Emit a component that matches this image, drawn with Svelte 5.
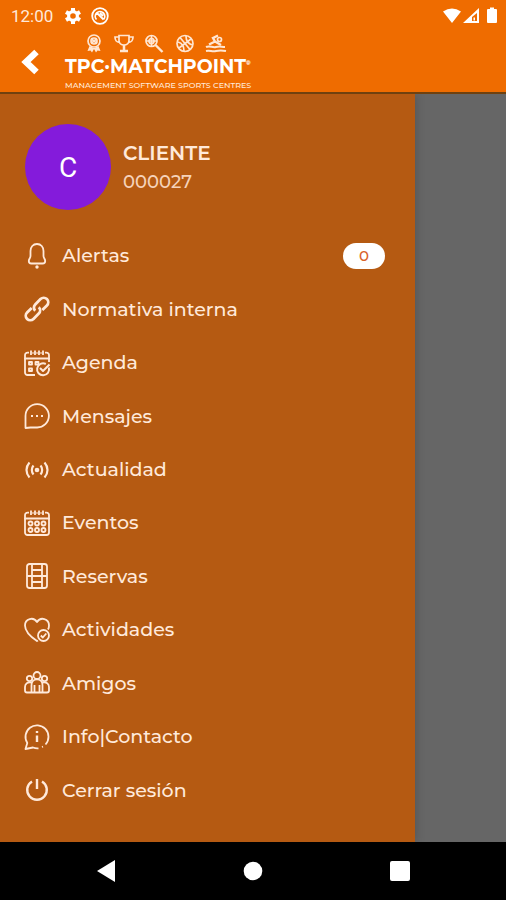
<script>
    const user = { name: 'CLIENTE', code: '000027' };
    const items = [
        { icon: 'bell', label: 'Alertas', count: 0 },
        { icon: 'link', label: 'Normativa interna' },
        { icon: 'agenda', label: 'Agenda' },
        { icon: 'chat', label: 'Mensajes' },
        { icon: 'signal', label: 'Actualidad' },
        { icon: 'calendar', label: 'Eventos' },
        { icon: 'court', label: 'Reservas' },
        { icon: 'heart', label: 'Actividades' },
        { icon: 'people', label: 'Amigos' },
        { icon: 'info', label: 'Info|Contacto' },
        { icon: 'power', label: 'Cerrar sesión' }
    ];
</script>

{#snippet icon(name)}
    <svg class="icon" viewBox="0 0 26 26" aria-hidden="true">
        {#if name === 'bell'}
            <path d="M13 1c-4 0-6.500 3-6.500 7v5c0 2-1.700 3-1.700 5 0 1.500 1 2.500 2.500 2.500h11.400c1.500 0 2.500-1 2.500-2.500 0-2-1.700-3-1.700-5V8c0-4-2.500-7-6.500-7z" />
            <circle class="solid" cx="13" cy="24" r="1.700" />
        {:else if name === 'link'}
            <g transform="rotate(-45 13 13)" stroke-width="2.800">
                <path d="M10 8.500H3.500a4.500 4.500 0 0 0 0 9H11a4.500 4.500 0 0 0 4.500-4.500" />
                <path d="M16 17.500h6.500a4.500 4.500 0 0 0 0-9H15a4.500 4.500 0 0 0-4.500 4.500" />
            </g>
        {:else if name === 'agenda' || name === 'calendar'}
            <path d="M7 .5v4.500M11 .5v4.500M15 .5v4.500M19 .5v4.500" />
            <path d="M5 2.700H3.500A2.500 2.500 0 0 0 1 5.200V8.500h24V5.200A2.500 2.500 0 0 0 22.500 2.700H21M8.500 3h1M12.500 3h1M16.500 3h1" />
            {#if name === 'agenda'}
                <path d="M1 8v14.500A2.500 2.500 0 0 0 3.500 25H11M25 8v4" />
                <path d="M5 12h3v2.500H5zM5 18.500h3V21H5zM11.500 12h3v2.500h-3z" />
                <path stroke-width="2" d="M24.800 17.500a6 6 0 1 1-3-3.500" />
                <path stroke-width="2" d="M16 18l3 3 6.500-6.500" />
            {:else}
                <path d="M1 8v14.500A2.500 2.500 0 0 0 3.500 25h19a2.500 2.500 0 0 0 2.500-2.500V8" />
                {#each [13.5, 20] as y}
                    {#each [6.5, 13, 19.5] as x}
                        <circle cx={x} cy={y} r="2" />
                    {/each}
                {/each}
            {/if}
        {:else if name === 'chat'}
            <path d="M1.500 25V13A11.700 11.700 0 1 1 13 24.500H6.500z" />
            <path stroke-width="2.200" d="M7 13h2M12 13h2M17 13h2" />
        {:else if name === 'signal'}
            <circle class="solid" cx="13" cy="13" r="2.300" />
            <path stroke-width="2.200" d="M9.500 8.500c-2.200 2.500-2.200 6.500 0 9M16.500 8.500c2.200 2.500 2.200 6.500 0 9M5.500 5.500c-4 4.500-4 10.500 0 15M20.500 5.500c4 4.500 4 10.500 0 15" />
        {:else if name === 'court'}
            <rect x="3" y="1" width="20" height="24" rx="2.500" />
            <path d="M8 1v24M18 1v24M3 13h20M8 7h10M8 19h10" />
        {:else if name === 'heart'}
            <path d="M14 23.500l-1 .6C7 20 1 14.500 1 8.500 1 1.500 9.500-.5 13 5c3.500-5.500 12-3.500 12 3.500 0 1.500-.4 3-1 4" />
            <circle cx="19.500" cy="18.500" r="5.500" />
            <path d="M16.800 18.500l2 2 3.500-4" />
        {:else if name === 'people'}
            <circle cx="13" cy="5.500" r="3.500" />
            <circle cx="5.500" cy="8.500" r="2.700" />
            <circle cx="20.500" cy="8.500" r="2.700" />
            <path d="M7.500 22.500V15c0-7.500 11-7.500 11 0v7.500zM7.500 12.500c-4-.7-6.500 1-6.500 4.500v3.500a2 2 0 0 0 2 2h4.500M18.500 12.500c4-.7 6.500 1 6.500 4.500v3.500a2 2 0 0 1-2 2h-4.500M10.500 15v7M15.500 15v7" />
        {:else if name === 'info'}
            <path d="M14.500 24.300A11.800 11.800 0 0 1 9 23.500L1.500 25l1.800-6A11.500 11.500 0 1 1 21.500 20.500M18 23l1-.4" />
            <path stroke-width="2.400" d="M13 11.500V18M13 7v2" />
        {:else}
            <path stroke-width="2.400" d="M8 4.500a9.800 9.800 0 1 0 10 0M13 2v10" />
        {/if}
    </svg>
{/snippet}

<div class="screen">
    <div class="status">
        <span>12:00</span>
        <svg width="18" height="18" viewBox="0 0 18 18" aria-hidden="true">
            <circle fill="none" stroke="#fff" stroke-width="3.200" cx="9" cy="9" r="4.400" />
            <path stroke="#fff" stroke-width="4" d="M9 1v3M9 14v3M2 5l2.600 1.500M13.400 11.500L16 13M2 13l2.600-1.500M13.400 6.500L16 5" />
        </svg>
        <svg width="18" height="18" viewBox="0 0 18 18" fill="none" stroke="#fff" stroke-width="1.800" aria-hidden="true">
            <circle cx="9" cy="9" r="7.800" />
            <path d="M5.500 12.500a4.700 4.700 0 1 1 7 0M6 6l6.500 6.500M9 6l3 3" />
        </svg>
        <svg class="system" width="56" height="18" viewBox="0 0 56 18" fill="#fff" aria-hidden="true">
            <path d="M1 4.500Q10 -1.500 19 4.500L10 16zM37 1v15H21z" />
            <path fill="#ef6c00" d="M35 6v8h-5V10z" />
            <path d="M31.500 10.500h1.500v3h-1.500zM46 2h2V.5h4V2h2a1 1 0 0 1 1 1v12a1 1 0 0 1-1 1h-8a1 1 0 0 1-1-1V3a1 1 0 0 1 1-1z" />
        </svg>
    </div>

    <header>
        <button class="back" aria-label="Volver">
            <svg width="20" height="28" viewBox="0 0 20 28" aria-hidden="true">
                <path fill="none" stroke="#fff" stroke-width="6.500" d="M16.500 4L6 14l10.500 10" />
            </svg>
        </button>
        <div class="logo">
            <svg width="142" height="20" viewBox="0 0 142 20" fill="none" stroke="#ffe6d2" stroke-width="1.700" aria-hidden="true">
                <circle cx="9" cy="7" r="6" />
                <circle cx="9" cy="7" r="3" />
                <path d="M6 4.500l6 5M6 9.500l6-5" />
                <path fill="#ffe6d2" d="M4.500 12l-2 5 3-.5L7 18.500 9 15l2 3.500 1.500-2 3 .5-2-5-4.500 2z" stroke="none" />
                <path d="M34 1.500h10v5c0 6-10 6-10 0zM34 3h-4c0 4 1.500 5 4.500 5.500M44 3h4c0 4-1.500 5-4.500 5.500" />
                <path stroke-width="2.500" d="M39 11v5M35 17h8" />
                <circle cx="66.500" cy="7" r="5.500" />
                <circle cx="66.500" cy="7" r="2.500" />
                <path d="M61 7h11M66.500 2v10" />
                <path stroke-width="2.400" d="M70.500 11l7 7" />
                <circle cx="100" cy="9.500" r="8" />
                <path d="M95 3.500l10 12M94 14l12-9M93 8c4 1 6 4 6 9M101 2c0 4 2 8 7 9" />
                <path stroke-width="2" d="M121 13c4-2 6 1 10 0s5 0 9 0M121 17c4-1 6 1 10 0s5-1 10 0" />
                <path stroke-width="2.400" d="M124 10.500l6-3 6 3.500M130 7.500l-2-3.500 5-2.500" />
                <circle cx="134.500" cy="5.500" r="2" />
            </svg>
            <strong>TPC·MATCHPOINT<sup>®</sup></strong>
            <small>MANAGEMENT SOFTWARE SPORTS CENTRES</small>
        </div>
    </header>

    <main>
        <div class="drawer">
            <div class="user">
                <div class="avatar">{user.name[0]}</div>
                <div>
                    <div class="name">{user.name}</div>
                    <div class="code">{user.code}</div>
                </div>
            </div>
            <nav>
                {#each items as item}
                    <a href="#{item.icon}">
                        {@render icon(item.icon)}
                        <span>{item.label}</span>
                        {#if item.count !== undefined}
                            <span class="badge">{item.count}</span>
                        {/if}
                    </a>
                {/each}
            </nav>
        </div>
    </main>

    <footer>
        <button aria-label="Atrás">
            <svg width="20" height="22" viewBox="0 0 20 22"><path fill="#fff" d="M19 0v22L1 11z" /></svg>
        </button>
        <button aria-label="Inicio">
            <svg width="20" height="20" viewBox="0 0 20 20"><circle fill="#fff" cx="10" cy="10" r="9.300" /></svg>
        </button>
        <button aria-label="Recientes">
            <svg width="20" height="20" viewBox="0 0 20 20"><rect fill="#fff" width="20" height="20" rx="2" /></svg>
        </button>
    </footer>
</div>

<style>
:global(body) {
    margin: 0;
    background: #000;
}
.screen {
    display: flex;
    flex-direction: column;
    min-height: 100vh;
    font-family: Montserrat, Inter, "Open Sans", sans-serif;
    color: #ffe9da;
}
button {
    display: flex;
    align-items: center;
    justify-content: center;
    padding: 0;
    border: none;
    background: transparent;
    cursor: pointer;
}
.status {
    display: flex;
    align-items: center;
    gap: 9px;
    height: 32px;
    padding: 0 8px 0 11px;
    background: #ef6c00;
    font-family: Roboto, sans-serif;
    font-size: 17px;
}
.status span {
    margin-right: 2px;
}
.system {
    margin-left: auto;
}
header {
    display: flex;
    align-items: center;
    height: 60px;
    padding-left: 20px;
    background: #ef6c00;
    border-bottom: 2px solid #6f410f;
}
.logo {
    display: flex;
    flex-direction: column;
    margin-left: 25px;
}
.logo svg {
    margin-left: 20px;
}
strong {
    font-size: 19px;
    line-height: 26px;
    font-weight: 700;
    color: #fff;
    white-space: nowrap;
}
sup {
    font-size: 6px;
    line-height: 6px;
    vertical-align: 8px;
}
small {
    font-size: 8px;
    line-height: 10px;
    font-weight: 500;
    white-space: nowrap;
}
main {
    flex: 1;
    display: flex;
    background: #666;
}
.drawer {
    display: flex;
    flex-direction: column;
    width: 82%;
    background: #b55a12;
    box-shadow: 0 0 10px rgba(0, 0, 0, 0.2);
    clip-path: inset(0 -12px 0 0);
}
.user {
    display: flex;
    align-items: center;
    gap: 12px;
    padding: 30px 25px 19px;
}
.avatar {
    display: flex;
    align-items: center;
    justify-content: center;
    width: 86px;
    height: 86px;
    border-radius: 50%;
    background: #841bdb;
    color: #fff;
    font-family: Roboto, sans-serif;
    font-size: 28px;
}
.name {
    font-size: 20px;
    line-height: 30px;
    font-weight: 600;
}
.code {
    font-size: 18px;
    line-height: 28px;
    font-weight: 500;
    color: #f5d2ba;
}
nav {
    flex: 1;
    display: grid;
    grid-auto-rows: 1fr;
    padding-bottom: 25px;
}
a {
    display: flex;
    align-items: center;
    gap: 12px;
    padding: 0 30px 0 24px;
    color: inherit;
    font-size: 19px;
    font-weight: 500;
    text-decoration: none;
}
.icon {
    width: 26px;
    height: 26px;
    fill: none;
    stroke: #ffe9da;
    stroke-width: 1.8;
    stroke-linejoin: round;
    overflow: visible;
}
.solid {
    fill: #ffe9da;
    stroke: none;
}
.badge {
    margin-left: auto;
    width: 42px;
    line-height: 26px;
    border-radius: 13px;
    background: #fff;
    color: #d9622b;
    font-size: 15px;
    text-align: center;
}
footer {
    display: grid;
    grid-template-columns: repeat(3, 1fr);
    height: 58px;
    padding: 0 32px;
    background: #000;
}
</style>
